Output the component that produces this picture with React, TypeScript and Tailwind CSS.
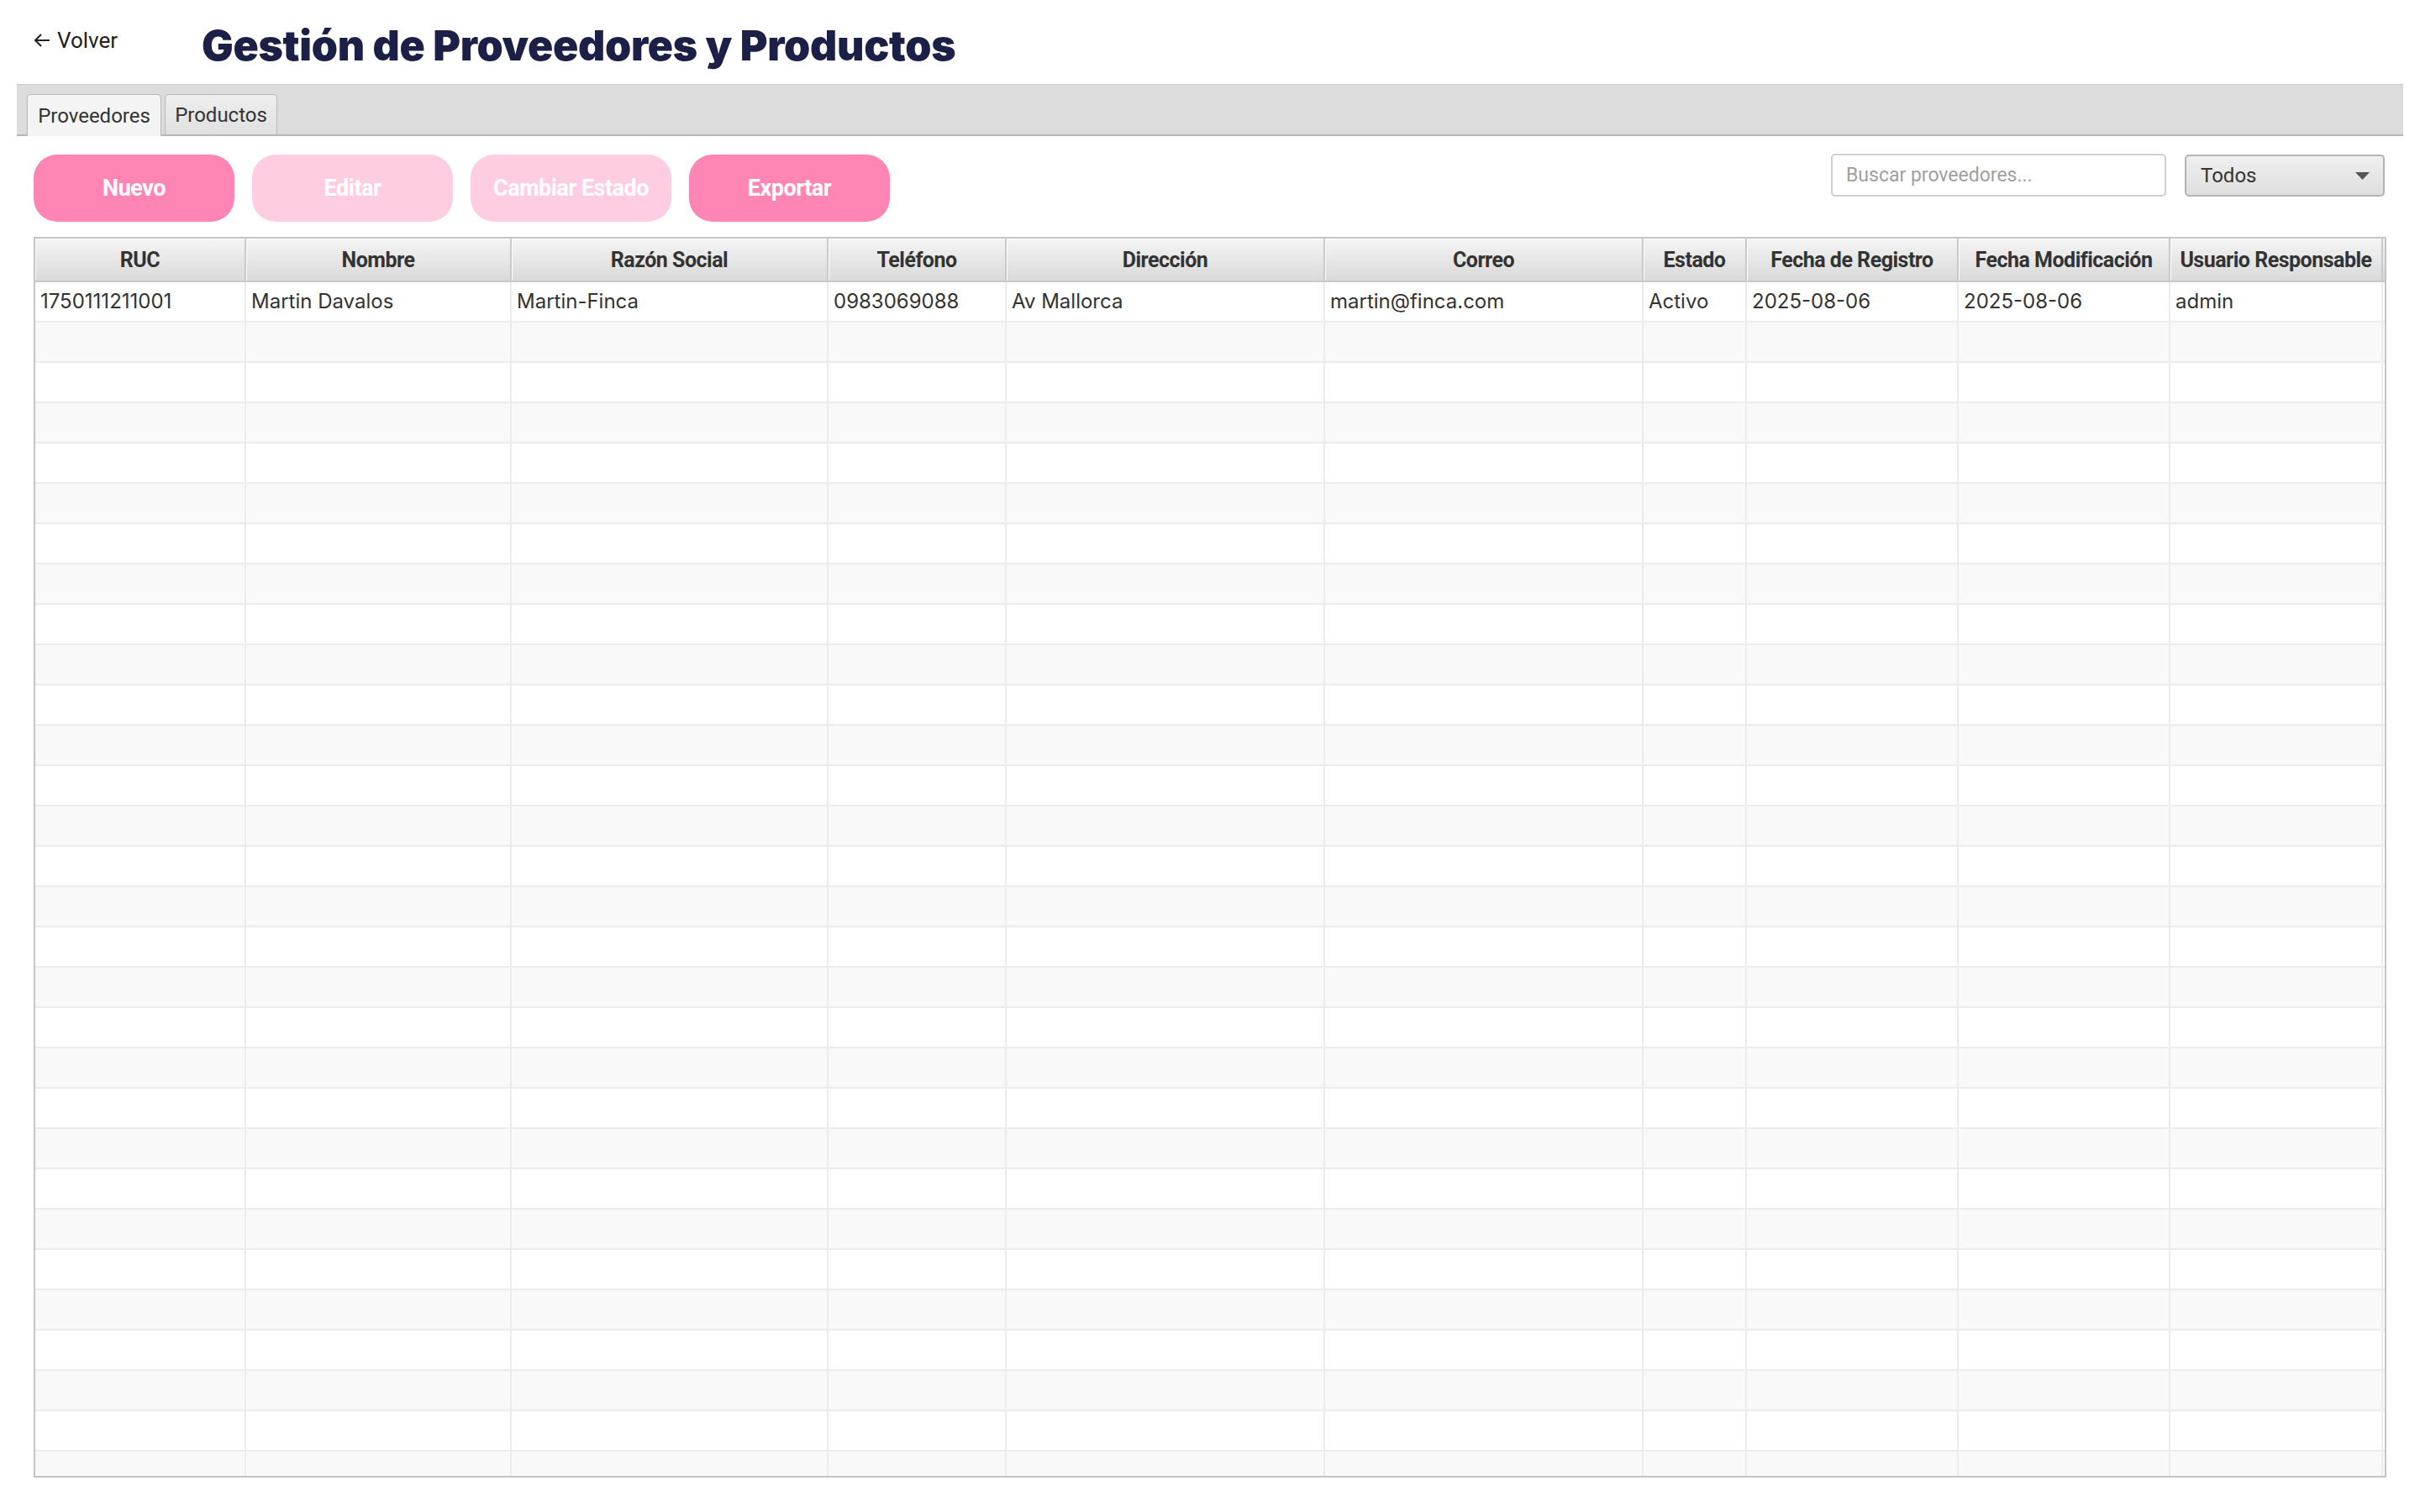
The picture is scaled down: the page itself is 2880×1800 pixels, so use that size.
import React from 'react';

const columns = [
  'RUC',
  'Nombre',
  'Razón Social',
  'Teléfono',
  'Dirección',
  'Correo',
  'Estado',
  'Fecha de Registro',
  'Fecha Modificación',
  'Usuario Responsable',
];

const firstRow = [
  '1750111211001',
  'Martin Davalos',
  'Martin-Finca',
  '0983069088',
  'Av Mallorca',
  'martin@finca.com',
  'Activo',
  '2025-08-06',
  '2025-08-06',
  'admin',
];

const gridCols =
  'grid grid-cols-[251px_316px_377px_212px_379px_379px_123px_252px_252px_253px]';

const App: React.FC = () => {
  const rows = Array.from({ length: 30 }, (_, i) => (i === 0 ? firstRow : null));

  return (
    <div className="w-[2880px] h-[1800px] bg-white font-['Roboto',sans-serif] text-[#333] overflow-hidden">
      {/* Header */}
      <header className="h-[100px] flex items-center px-[40px]">
        <button className="w-[200px] flex items-center gap-[8px] text-[26px] text-[#222] -mt-[4px]">
          <svg width="20" height="18" viewBox="0 0 20 18" fill="none" stroke="#222" strokeWidth="2">
            <path d="M19 9 H2" />
            <path d="M9 2 L2 9 L9 16" />
          </svg>
          <span>Volver</span>
        </button>
        <h1 className="font-['Inter',sans-serif] font-black text-[50px] tracking-[-0.3px] text-[#1c2046] mt-[8px]">
          Gestión de Proveedores y Productos
        </h1>
      </header>

      {/* Tabs */}
      <div className="mx-[20px] h-[62px] bg-[#dcdcdc] border-t border-[#cacaca] border-b-2 border-b-[#b5b5b5] flex items-end pl-[12px] gap-[4px]">
        <div className="h-[50px] -mb-[2px] w-[160px] flex items-center justify-center bg-[#f4f4f4] border border-b-0 border-[#b8b8b8] rounded-t-[5px] text-[24px] text-[#333]">
          Proveedores
        </div>
        <div className="h-[48px] w-[134px] flex items-center justify-center bg-linear-to-b from-[#eeeeee] to-[#e0e0e0] border border-b-0 border-[#b8b8b8] rounded-t-[5px] text-[24px] text-[#333]">
          Productos
        </div>
      </div>

      {/* Content */}
      <main className="px-[40px] pt-[21px]">
        <div className="flex items-start justify-between h-[81px]">
          <div className="flex gap-[21px] pt-[1px]">
            <button className="w-[239px] h-[80px] rounded-[28px] bg-[#ff86b4] text-white font-bold text-[27px] tracking-[-0.5px]">
              Nuevo
            </button>
            <button className="w-[239px] h-[80px] rounded-[28px] bg-[#ffcde1] text-white font-bold text-[27px] tracking-[-0.5px]">
              Editar
            </button>
            <button className="w-[239px] h-[80px] rounded-[28px] bg-[#ffcde1] text-white font-bold text-[27px] tracking-[-0.5px]">
              Cambiar Estado
            </button>
            <button className="w-[239px] h-[80px] rounded-[28px] bg-[#ff86b4] text-white font-bold text-[27px] tracking-[-0.5px]">
              Exportar
            </button>
          </div>
          <div className="flex items-start gap-[22px] pr-[2px]">
            <input
              placeholder="Buscar proveedores..."
              className="w-[399px] h-[51px] border-2 border-[#cfcfcf] rounded-[5px] px-[16px] text-[23px] placeholder:text-[#a0a0a0] outline-none"
            />
            <div className="w-[238px] h-[50px] mt-[1px] flex items-center justify-between pl-[17px] pr-[16px] rounded-[5px] border-2 border-[#b3b3b3] bg-linear-to-b from-[#f0f0f0] to-[#dedede] text-[24px] text-[#333]">
              <span>Todos</span>
              <svg width="17" height="9" viewBox="0 0 17 9">
                <path d="M0 0 L17 0 L8.5 9 Z" fill="#555" />
              </svg>
            </div>
          </div>
        </div>

        {/* Table */}
        <div className="mt-[18px] h-[1477px] border-2 border-[#c4c4c4] flex flex-col overflow-hidden">
          <div className={`${gridCols} h-[52px] shrink-0 border-b-2 border-[#c9c9c9] bg-linear-to-b from-[#f5f5f5] to-[#d9d9d9]`}>
            {columns.map((c) => (
              <div
                key={c}
                className="flex items-center justify-center pt-[2px] border-r-2 border-[#c9c9c9] shadow-[inset_1px_1px_0_#ffffff] font-bold text-[25px] tracking-[-0.5px] text-[#333]"
              >
                {c}
              </div>
            ))}
          </div>
          <div className="flex-1 overflow-hidden">
            {rows.map((row, i) => (
              <div
                key={i}
                className={`${gridCols} h-[48px] border-b-2 border-[#ececec] ${i % 2 === 0 ? 'bg-white' : 'bg-[#f9f9f9]'}`}
              >
                {columns.map((c, j) => (
                  <div
                    key={c}
                    className="flex items-center pl-[6px] border-r-2 border-[#ececec] font-['Inter',sans-serif] text-[24px] text-[#333] whitespace-nowrap overflow-hidden"
                  >
                    {row ? row[j] : ''}
                  </div>
                ))}
              </div>
            ))}
          </div>
        </div>
      </main>
    </div>
  );
};

export default App;
